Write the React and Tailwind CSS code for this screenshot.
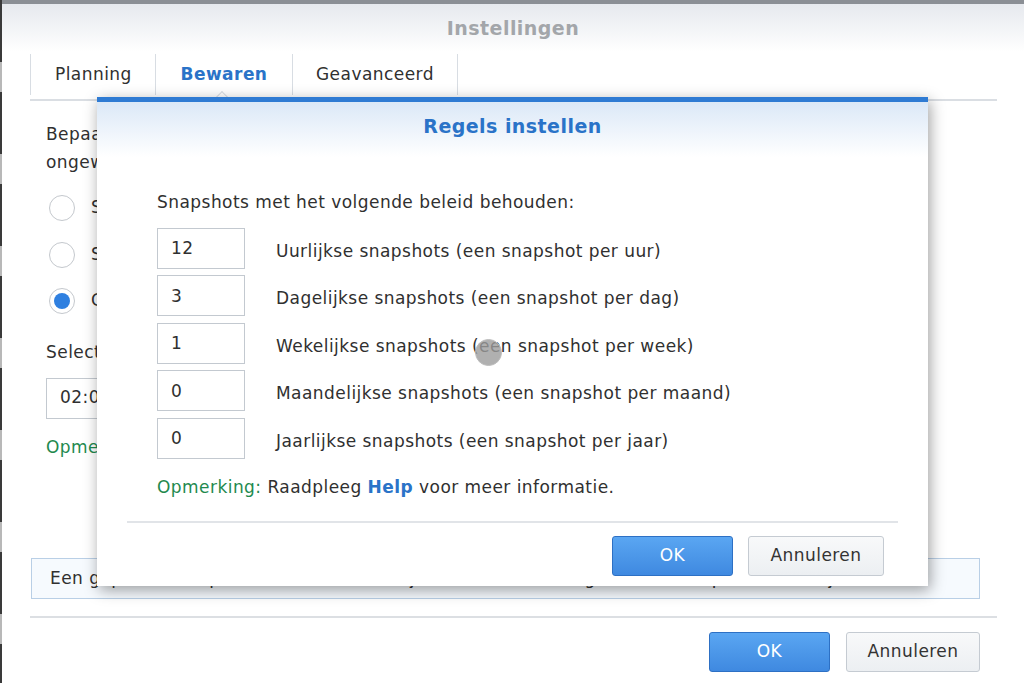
import { useState } from "react";

const rules = [
  { value: "12", label: "Uurlijkse snapshots (een snapshot per uur)" },
  { value: "3", label: "Dagelijkse snapshots (een snapshot per dag)" },
  { value: "1", label: "Wekelijkse snapshots (een snapshot per week)" },
  { value: "0", label: "Maandelijkse snapshots (een snapshot per maand)" },
  { value: "0", label: "Jaarlijkse snapshots (een snapshot per jaar)" },
];

const Radio = ({ checked, label }) => (
  <div className="flex items-center gap-[16px] h-[26px]">
    <div className="w-[26px] h-[26px] rounded-full border border-[#c4c8cd] bg-white flex items-center justify-center">
      {checked && <div className="w-[16px] h-[16px] rounded-full bg-[#2f80e0]" />}
    </div>
    <span>{label}</span>
  </div>
);

const BlueButton = ({ children }) => (
  <button className="h-[40px] rounded-[3px] border border-[#2d70c4] bg-gradient-to-b from-[#5aa6f2] to-[#3f89e0] text-white text-[17px]">
    {children}
  </button>
);

const GreyButton = ({ children }) => (
  <button className="h-[40px] rounded-[3px] border border-[#c5cbd2] bg-gradient-to-b from-[#f8f9fa] to-[#eceff2] text-[#333] text-[17px]">
    {children}
  </button>
);

const App = () => {
  const [values, setValues] = useState(rules.map((r) => r.value));

  return (
    <div className="w-[1024px] h-[683px] relative overflow-hidden bg-white flex text-[#303030] font-['DejaVu_Sans',Verdana,sans-serif] text-[17px] tracking-[0.45px]">
      {/* desktop edge behind the window */}
      <div className="w-[2px] shrink-0 bg-[repeating-linear-gradient(to_bottom,#3a3a3a_0px,#3a3a3a_62px,#b8b8b8_62px,#b8b8b8_92px)]" />

      <div className="flex-1 flex flex-col">
        <div className="h-[4px] bg-[#8b8f95]" />
        <div className="h-[48px] bg-gradient-to-b from-[#e6e9ee] to-white flex items-center justify-center">
          <h1 className="text-[19px] font-bold text-[#a3a6aa] mt-[1px]">Instellingen</h1>
        </div>

        {/* tabs */}
        <div className="ml-[28px] mr-[27px] mt-[2px] flex border-b-2 border-[#dadee3] h-[47px]">
          <div className="w-[126px] border-l border-r border-[#d8dde3] flex items-center pl-[24px] mb-[4px]">
            Planning
          </div>
          <div className="w-[137px] border-r border-[#d8dde3] flex items-center justify-center font-bold text-[#2a73c8] relative mb-[4px]">
            Bewaren
            <div className="absolute left-[61px] bottom-[-8px] w-[10px] h-[10px] rotate-45 bg-white border-l border-t border-[#d8dde3]" />
          </div>
          <div className="w-[165px] border-r border-[#d8dde3] flex items-center pl-[23px] mb-[4px]">
            Geavanceerd
          </div>
        </div>

        {/* background page content */}
        <div className="pl-[44px] pt-[19px] flex flex-col">
          <p className="leading-[28px]">
            Bepaal hoe lang snapshots worden bewaard, zodat er voldoende ruimte overblijft.
            <br />
            ongewenste snapshots worden automatisch verwijderd.
          </p>
          <div className="mt-[19px] flex flex-col gap-[20.5px] pl-[3px]">
            <Radio label="Snapshots nooit automatisch verwijderen" />
            <Radio label="Slechts het laatste aantal snapshots bewaren" />
            <Radio checked label="Geavanceerde bewaarregels instellen" />
          </div>
          <div className="mt-[26px]">Selecteer de tijd voor het verwijderen van snapshots:</div>
          <div className="mt-[12px] w-[160px] h-[41px] border border-[#c3c9d0] flex items-center pl-[13px]">02:00</div>
          <div className="mt-[16px] text-[#1f8a4f]">Opmerking: verlopen snapshots worden dagelijks verwijderd.</div>
        </div>

        <div className="mt-auto ml-[29px] mr-[44px] h-[41px] border border-[#b9cfe6] bg-[#f6fafe] flex items-center pl-[18px] whitespace-nowrap overflow-hidden">
          Een geplande snapshot wordt niet verwijderd als er een vergrendelde snapshot overblijft.
        </div>
        <div className="mt-[17px] ml-[28px] mr-[27px] border-t-2 border-[#dcdfe3]" />
        <div className="flex justify-end gap-[16px] mr-[44px] mt-[14px] mb-[11px]">
          <BlueButton>
            <span className="block w-[119px]">OK</span>
          </BlueButton>
          <GreyButton>
            <span className="block w-[132px]">Annuleren</span>
          </GreyButton>
        </div>
      </div>

      {/* dialog */}
      <div className="absolute left-[97px] top-[97px] w-[831px] h-[489px] bg-white border-t-[5px] border-[#2f7bd3] shadow-[2px_4px_14px_rgba(0,0,0,0.38)] flex flex-col">
        <div className="h-[55px] bg-gradient-to-b from-[#dbe8f7] to-white flex justify-center pt-[10px]">
          <h2 className="text-[19px] font-bold text-[#2a73c8]">Regels instellen</h2>
        </div>
        <div className="pl-[60px] pt-[33px] flex flex-col">
          <p>Snapshots met het volgende beleid behouden:</p>
          <div className="mt-[12px] flex flex-col gap-[6.5px]">
            {rules.map((r, i) => (
              <div key={r.label} className="flex items-center gap-[31px]">
                <input
                  value={values[i]}
                  onChange={(e) => {
                    const next = [...values];
                    next[i] = e.target.value;
                    setValues(next);
                  }}
                  className="w-[88px] h-[41px] border border-[#c3c9d0] pl-[13px] outline-none"
                />
                <span className="pt-[7px]">{r.label}</span>
              </div>
            ))}
          </div>
          <p className="mt-[16px]">
            <span className="text-[#1f8a4f]">Opmerking:</span> Raadpleeg{" "}
            <span className="font-bold text-[#2a73c8]">Help</span> voor meer informatie.
          </p>
        </div>
        <div className="mt-auto mx-[30px] border-t-2 border-[#e1e4e8]" />
        <div className="flex justify-end gap-[15px] mr-[44px] mt-[13px] mb-[10px]">
          <BlueButton>
            <span className="block w-[119px]">OK</span>
          </BlueButton>
          <GreyButton>
            <span className="block w-[134px]">Annuleren</span>
          </GreyButton>
        </div>
      </div>

      {/* pointer */}
      <div className="absolute left-[475px] top-[339px] w-[27px] h-[27px] rounded-full bg-[#9c9c9c]/80 border border-[#bdbdbd]" />
    </div>
  );
};

export default App;
